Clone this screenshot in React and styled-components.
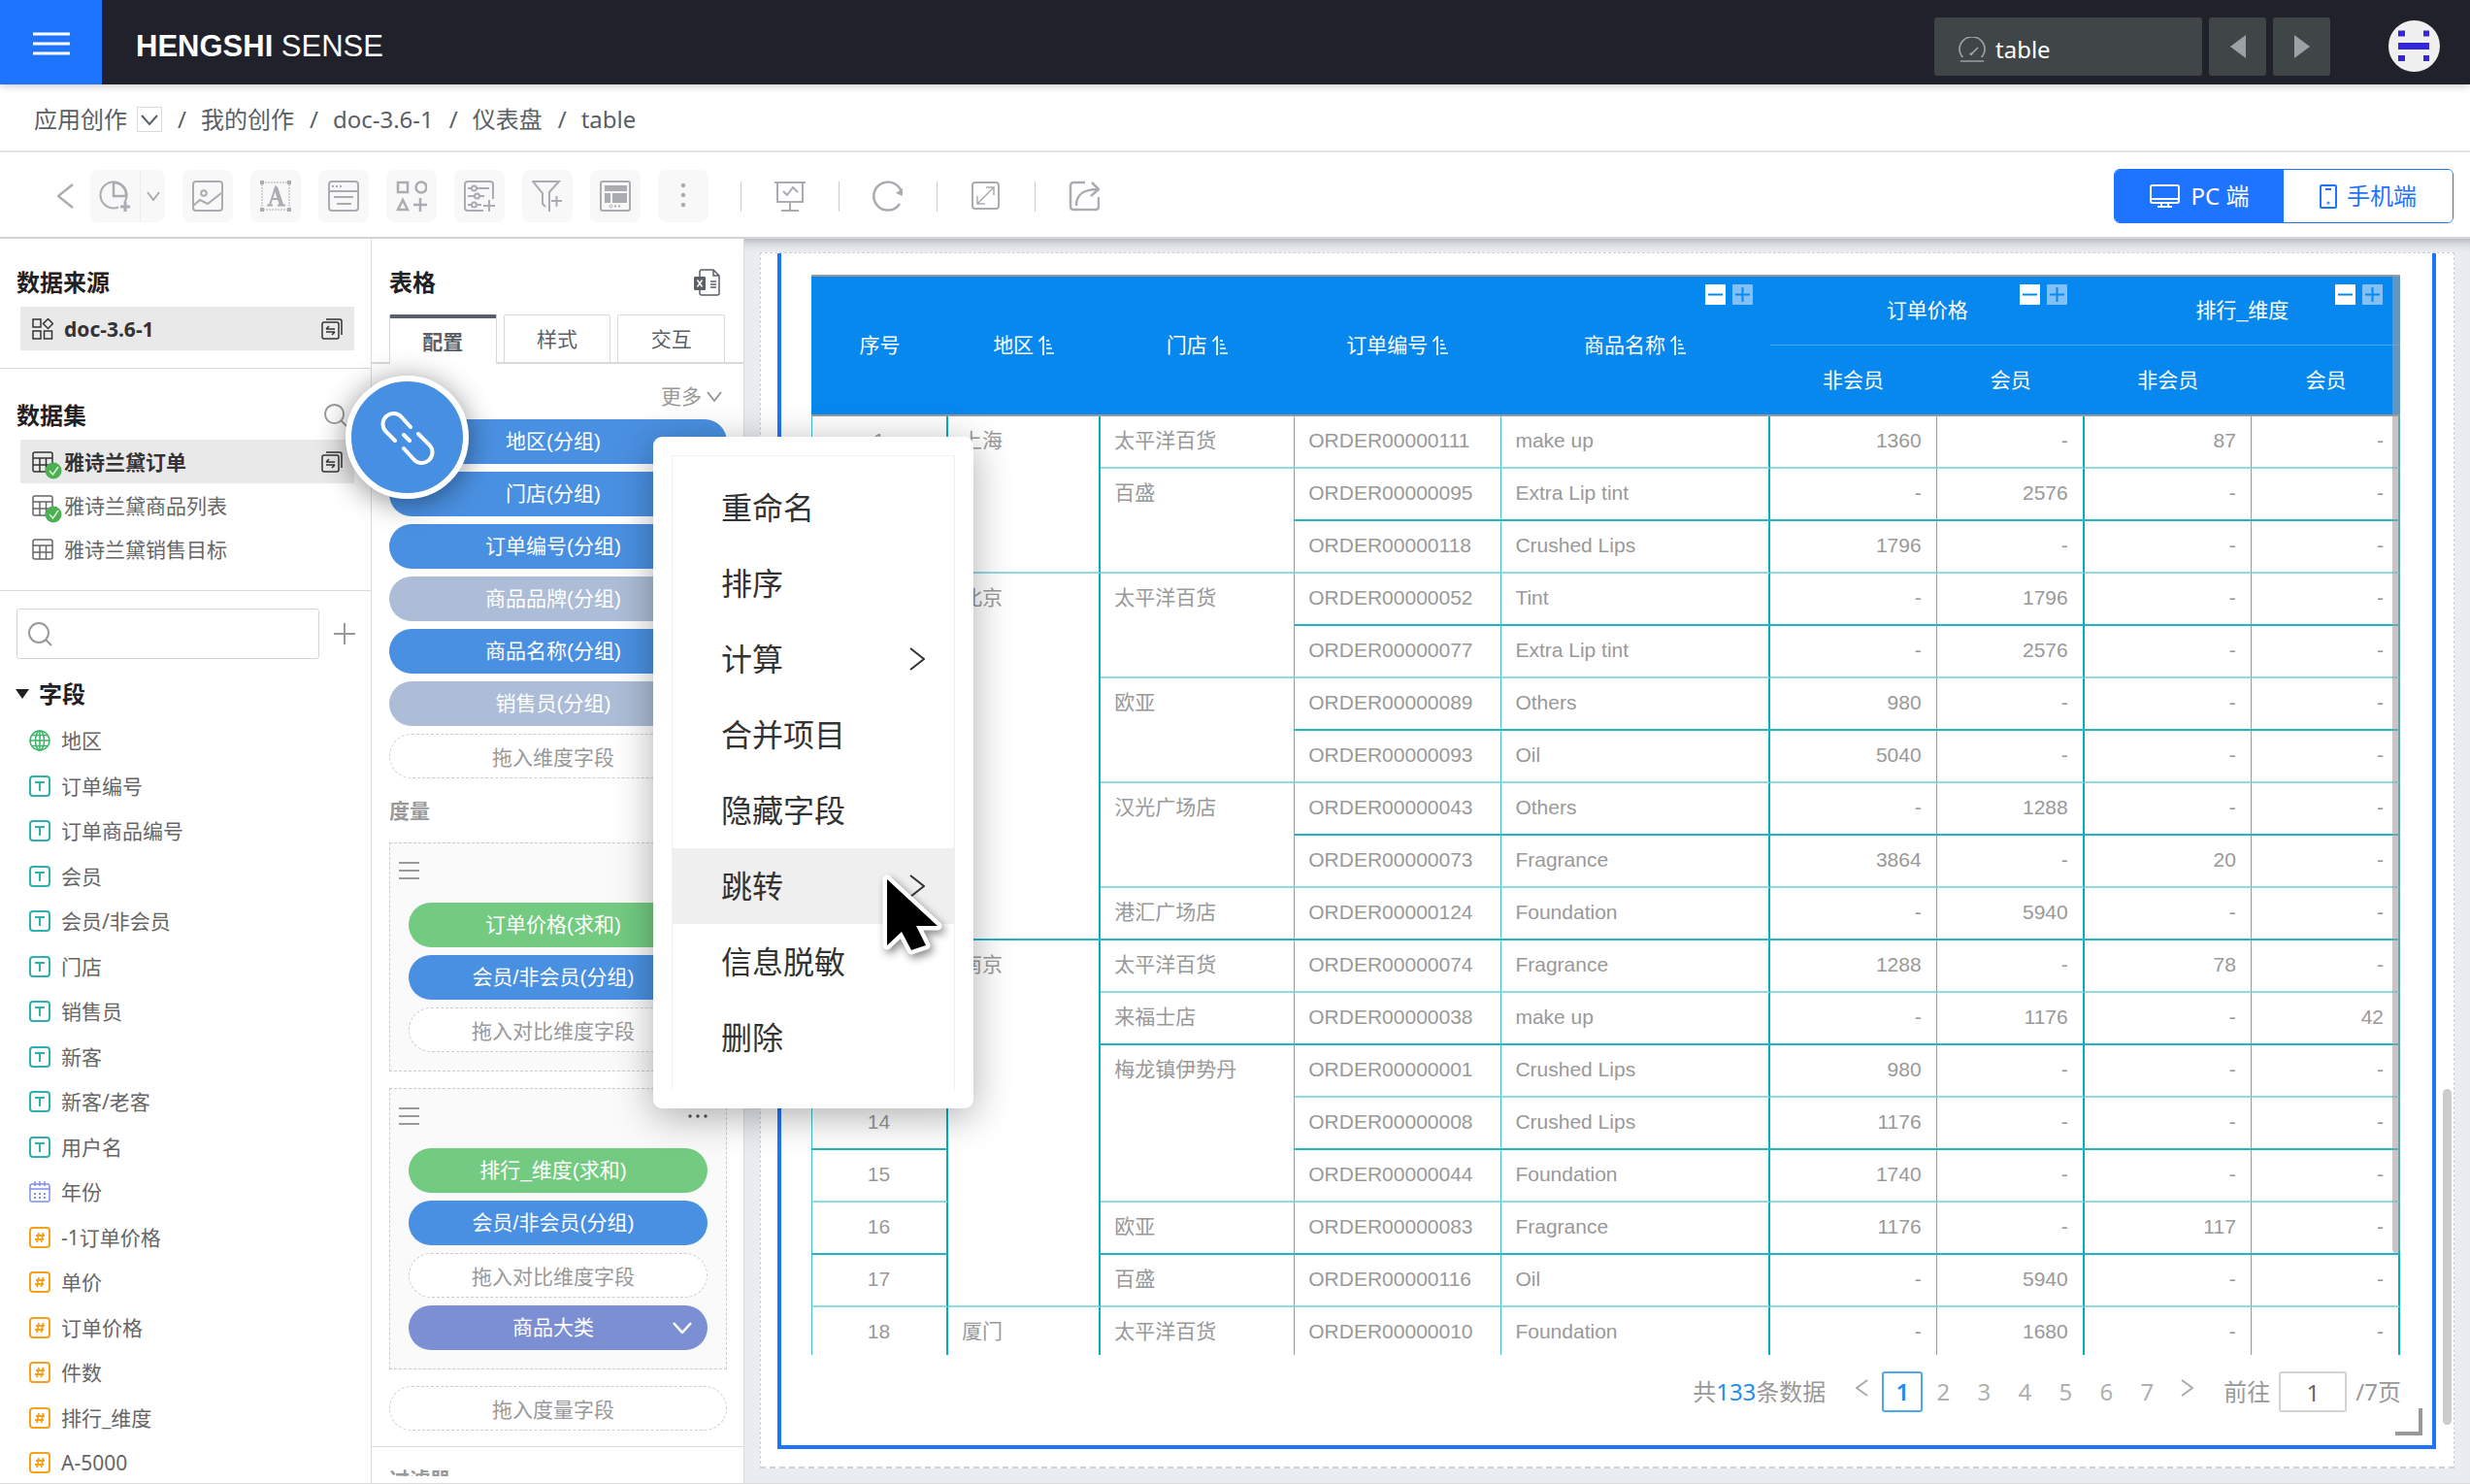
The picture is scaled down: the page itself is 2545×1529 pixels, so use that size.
import React from "react";
import styled, { createGlobalStyle, css } from "styled-components";

const ui = `"Noto Sans", "Noto Sans CJK SC", sans-serif`;
const grid = `"Liberation Sans", "Noto Sans CJK SC", sans-serif`;

const GlobalStyle = createGlobalStyle`
  *, *::before, *::after { box-sizing: border-box; }
  body { margin: 0; font-family: ${ui}; background: #fff; }
  button, input { font-family: inherit; margin: 0; }
  button { border: 0; padding: 0; background: none; cursor: pointer; color: inherit; }
  h1, h2, h3, p, ul, ol { margin: 0; padding: 0; }
  ul, ol { list-style: none; }
  a { color: inherit; text-decoration: none; }
  svg { display: block; flex: none; }
`;

const Page = styled.div`
  position: relative;
  display: flex;
  flex-direction: column;
  height: 100vh;
  overflow: hidden;
`;

/* ---------- top bar ---------- */
const TopBar = styled.header`
  position: relative;
  z-index: 3;
  display: flex;
  align-items: stretch;
  height: 87px;
  flex: none;
  background: #21212b;
  box-shadow: 0 2px 8px rgba(0, 0, 0, 0.2);
`;
const MenuButton = styled.button`
  display: flex;
  align-items: center;
  justify-content: center;
  width: 105px;
  padding-top: 3px;
  background: #1f74ff;
`;
const Brand = styled.h1`
  align-self: center;
  padding: 9px 0 0 35px;
  font: 400 31px/40px "Liberation Sans", sans-serif;
  color: #fff;
`;
const TopTools = styled.div`
  display: flex;
  align-items: center;
  gap: 7px;
  margin-left: auto;
  padding: 8px 31px 0 0;
`;
const TopButton = styled.button`
  display: flex;
  align-items: center;
  justify-content: ${(p) => (p.$wide ? "flex-start" : "center")};
  gap: 9px;
  width: ${(p) => (p.$wide ? 276 : 59)}px;
  height: 60px;
  padding: ${(p) => (p.$wide ? "6px 0 0 24px" : "0")};
  border-radius: 3px;
  background: #404548;
  color: #fff;
  font-size: 24px;
  line-height: 32px;
`;
const Avatar = styled.button`
  margin-left: 53px;
`;

/* ---------- breadcrumb ---------- */
const Crumbs = styled.nav`
  flex: none;
  height: 70px;
  padding: 0 35px;
  border-bottom: 2px solid #e3e3e3;
  color: #5a5f66;
  font-size: 24px;
  line-height: 32px;
  ol { display: flex; align-items: center; height: 100%; padding-top: 4px; }
  li { display: flex; align-items: center; gap: 10px; }
  li + li::before { content: "/"; margin: 0 5px 0 16px; }
`;
const CrumbToggle = styled.button`
  display: flex;
  align-items: center;
  justify-content: center;
  width: 26px;
  height: 26px;
  border: 1px solid #d9d9d9;
`;

/* ---------- toolbar ---------- */
const Toolbar = styled.div`
  flex: none;
  display: flex;
  align-items: center;
  height: 89px;
  padding: 3px 17px 0 59px;
  border-bottom: 2px solid #d4d4d4;
  background: #fff;
  color: #aaacb2;
`;
const ToolGroup = styled.div`
  display: flex;
  align-items: center;
  gap: 18px;
  margin-left: 17px;
`;
const Tool = styled.button`
  display: flex;
  align-items: center;
  justify-content: center;
  width: ${(p) => p.$width || 52}px;
  height: 54px;
  border-radius: ${(p) => p.$radius || "8px"};
  background: #f8f8f8;
  border-right: ${(p) => (p.$split ? "1px solid #eee" : "0")};
`;
const Split = styled.div`
  display: flex;
`;
const PlainTools = styled.div`
  display: flex;
  align-items: center;
  gap: 34px;
  margin-left: 33px;
`;
const Bar = styled.span`
  width: 1px;
  height: 31px;
  background: #ccc;
`;
const DeviceSwitch = styled.div`
  display: flex;
  width: 350px;
  height: 56px;
  margin-left: auto;
  border: 1px solid #1f74ff;
  border-radius: 6px;
  overflow: hidden;
`;
const Device = styled.button`
  flex: 1;
  display: flex;
  align-items: center;
  justify-content: center;
  gap: ${(p) => (p.$active ? 12 : 10)}px;
  background: ${(p) => (p.$active ? "#1f74ff" : "#fff")};
  color: ${(p) => (p.$active ? "#fff" : "#1f74ff")};
  font-size: 24px;
  line-height: 32px;
`;

/* ---------- work area ---------- */
const Work = styled.div`
  flex: 1;
  min-height: 0;
  display: flex;
  border-bottom: 1px solid #dcdcdc;
`;
const Panel = styled.aside`
  flex: none;
  display: flex;
  flex-direction: column;
  width: ${(p) => p.$width}px;
  min-height: 0;
  overflow: hidden;
  border-right: 1px solid #dcdcdc;
  background: #fff;
`;
const Section = styled.section`
  padding: ${(p) => p.$top}px 17px ${(p) => p.$bottom}px;
  border-bottom: 1px solid #d9d9d9;
`;
const TitleRow = styled.div`
  display: flex;
  align-items: center;
  justify-content: space-between;
  padding-right: 7px;
  button { color: #999; }
`;
const Title = styled.h2`
  color: #1f2125;
  font-size: 24px;
  line-height: 32px;
  font-weight: 700;
`;
const SetList = styled.ul`
  margin: 9px 0 0 4px;
`;
const SetItem = styled.li`
  display: flex;
  align-items: center;
  gap: 11px;
  height: 45px;
  padding: 0 12px;
  background: ${(p) => (p.$active ? "#e9e9e9" : "transparent")};
  color: ${(p) => (p.$active ? "#333" : "#666")};
  font-size: 21px;
  line-height: 32px;
  font-weight: ${(p) => (p.$active ? 700 : 400)};
  button { margin-left: auto; color: #333; }
`;
const SearchRow = styled.div`
  display: flex;
  align-items: center;
  gap: 15px;
  padding: 18px 16px 0 17px;
  color: #999;
`;
const SearchBox = styled.label`
  flex: 1;
  min-width: 0;
  display: flex;
  align-items: center;
  height: 52px;
  padding-left: 11px;
  border: 1px solid #d4d4d4;
  border-radius: 3px;
  input {
    flex: 1;
    min-width: 0;
    border: 0;
    outline: 0;
    background: none;
    font-size: 21px;
  }
`;
const FieldsTitle = styled.button`
  display: flex;
  align-items: center;
  gap: 10px;
  padding: 20px 16px 0;
`;
const FieldList = styled.ul`
  display: grid;
  grid-auto-rows: 46px 47px;
  margin-top: 9px;
`;
const Field = styled.li`
  display: flex;
  align-items: center;
  gap: 11px;
  padding-left: 30px;
  color: #666;
  font-size: 21px;
  line-height: 32px;
`;

/* ---------- config panel ---------- */
const ConfigHead = styled.div`
  display: flex;
  justify-content: space-between;
  align-items: center;
  padding: 29px 23px 0 18px;
`;
const Tabs = styled.div`
  display: flex;
  gap: 7px;
  flex: none;
  height: 51px;
  margin-top: 17px;
  padding: 0 19px 0 18px;
  box-shadow: inset 0 -2px 0 #d9d9d9;
`;
const Tab = styled.button`
  flex: 1;
  border: 1px solid #d9d9d9;
  border-top: ${(p) => (p.$active ? "4px solid #5a5f69" : "1px solid #d9d9d9")};
  border-bottom: ${(p) => (p.$active ? "0" : "2px solid #d9d9d9")};
  border-radius: 2px 2px 0 0;
  background: #fff;
  color: #5a5f69;
  font-size: 21px;
  line-height: 32px;
  font-weight: ${(p) => (p.$active ? 700 : 400)};
`;
const More = styled.button`
  display: flex;
  align-items: center;
  align-self: flex-end;
  gap: 5px;
  margin: 17px 22px 8px 0;
  color: #999;
  font-size: 21px;
  line-height: 32px;
`;
const Stack = styled.div`
  display: flex;
  flex-direction: column;
  gap: 8px;
  padding: ${(p) => p.$pad || "0"};
`;
const pillColors = { blue: "#4a90e2", muted: "#adbdd7", green: "#73cb81", purple: "#7c8fd2" };
const Pill = styled.button`
  position: relative;
  display: flex;
  align-items: center;
  justify-content: center;
  flex: none;
  width: 100%;
  height: 46px;
  padding-right: 10px;
  border-radius: 23px;
  background: ${(p) => pillColors[p.$tone]};
  color: #fff;
  font-family: ${grid};
  font-size: 21px;
  line-height: 32px;
  svg { position: absolute; right: 16px; }
`;
const Drop = styled.div`
  display: flex;
  align-items: center;
  justify-content: center;
  height: 46px;
  padding: 2px 10px 0 0;
  border: 1px dashed #ccc;
  border-radius: 23px;
  background: #fff;
  color: #999;
  font-size: 21px;
  line-height: 32px;
`;
const SubTitle = styled.h3`
  padding: 17px 18px 0;
  color: #999;
  font-size: 21px;
  line-height: 32px;
  font-weight: 700;
`;
const Measures = styled.div`
  display: flex;
  flex-direction: column;
  gap: 17px;
  padding: 17px 17px 16px 18px;
  border-bottom: 1px solid #d9d9d9;
`;
const Group = styled.div`
  padding: 0 19px 19px;
  border: 1px dashed #ccc;
  background: #fafafa;
`;
const GroupHead = styled.div`
  display: flex;
  align-items: center;
  justify-content: space-between;
  height: 61px;
  margin-left: -10px;
  padding-bottom: 6px;
  color: #999;
`;
const FilterPeek = styled.div`
  flex: none;
  height: 30px;
  overflow: hidden;
`;

/* ---------- canvas ---------- */
const Canvas = styled.main`
  flex: 1;
  min-width: 0;
  display: flex;
  padding: 14px 16px 15px;
  background: #ebecf2;
  box-shadow: inset 0 12px 12px -10px rgba(0, 0, 0, 0.3);
`;
const Sheet = styled.div`
  position: relative;
  flex: 1;
  min-width: 0;
  display: flex;
  padding: 0 18px 18px 17px;
  border: 1px dashed #d0d0d4;
  border-bottom-width: 2px;
  background: #fff;
`;
const Widget = styled.section`
  position: relative;
  flex: 1;
  min-width: 0;
  display: flex;
  flex-direction: column;
  padding: 22px 33px 34px 31px;
  border: solid #1f74ff;
  border-width: 0 4px 4px;
`;
const Scroll = styled.div`
  position: relative;
  flex: 1;
  min-height: 0;
  overflow: hidden;
`;
const Thumb = styled.div`
  position: absolute;
  right: ${(p) => p.$right}px;
  top: ${(p) => p.$top};
  bottom: ${(p) => p.$bottom}px;
  width: ${(p) => p.$width}px;
  border-radius: 5px;
  background: ${(p) => p.$color};
`;
const Table = styled.table`
  width: 100%;
  table-layout: fixed;
  border-collapse: separate;
  border-spacing: 0;
  font-family: ${grid};
  font-size: 21px;
  line-height: 30px;
  color: #999;
`;
const Th = styled.th`
  position: relative;
  height: 73px;
  padding: 0;
  background: #0788ef;
  color: #fff;
  font-weight: 400;
  border-top: ${(p) => (p.$sub ? "0" : "2px solid #999")};
  border-bottom: ${(p) => (p.$line ? "1px solid #4fa6ee" : "2px solid #999")};
`;
const ThText = styled.span`
  display: inline-flex;
  align-items: center;
  gap: 5px;
  padding-right: 2px;
`;
const Fold = styled.span`
  position: absolute;
  top: 8px;
  right: 18px;
  display: flex;
  gap: 7px;
`;
const FoldButton = styled.button`
  display: flex;
  align-items: center;
  justify-content: center;
  width: 21px;
  height: 21px;
  border-radius: 1px;
  background: ${(p) => (p.$dim ? "#83c0f5" : "#fff")};
  color: #0788ef;
`;
const Td = styled.td`
  height: 54px;
  padding: 0 15px 0 14px;
  vertical-align: top;
  line-height: 50px;
  text-align: ${(p) => p.$align || "left"};
  white-space: nowrap;
  border-bottom: 2px solid ${(p) => (p.$strong ? "#1fb5c6" : "#8fdbe3")};
  border-right: ${(p) => (p.$thick ? "2px solid #00b0c0" : "1px solid #3fc0cc")};
  ${(p) => p.$first && css`border-left: 1px solid #3fc0cc;`}
`;
const Pager = styled.nav`
  display: flex;
  align-items: center;
  justify-content: flex-end;
  height: 42px;
  margin: 17px -1px 0 0;
  color: #999;
  font-size: 24px;
  line-height: 32px;
  b { color: #1f8cf0; font-weight: 400; }
`;
const PageButton = styled.button`
  width: 42px;
  height: 42px;
  border: ${(p) => (p.$active ? "2px solid #4fa6f0" : "0")};
  border-radius: 3px;
  color: ${(p) => (p.$active ? "#1f8cf0" : "#b0b0b0")};
  font-size: 24px;
  line-height: 32px;
  font-weight: ${(p) => (p.$active ? 600 : 400)};
`;
const Arrow = styled.button`
  display: flex;
  padding: ${(p) => p.$pad};
  color: #aaa;
`;
const GoTo = styled.label`
  display: flex;
  align-items: center;
  gap: 9px;
  input {
    width: 70px;
    height: 42px;
    border: 2px solid #d4d4d4;
    border-radius: 3px;
    padding: 0;
    text-align: center;
    color: #666;
    font-size: 24px;
  }
`;
const Corner = styled.span`
  position: absolute;
  right: 10px;
  bottom: 10px;
  width: 28px;
  height: 28px;
  border: solid #999;
  border-width: 0 4px 4px 0;
`;

/* ---------- floating pieces ---------- */
const LinkBubble = styled.button`
  position: absolute;
  z-index: 5;
  left: 356px;
  top: 387px;
  display: flex;
  align-items: center;
  justify-content: center;
  width: 127px;
  height: 127px;
  border: 6px solid #fff;
  border-radius: 50%;
  background: #478fe3;
  box-shadow: 0 4px 30px rgba(0, 0, 0, 0.45);
`;
const Popup = styled.div`
  position: absolute;
  z-index: 6;
  left: 673px;
  top: 450px;
  width: 330px;
  padding: 19px;
  border-radius: 9px;
  background: #fff;
  box-shadow: 0 8px 40px rgba(0, 0, 0, 0.32);
`;
const MenuList = styled.ul`
  padding: 14px 0 15px;
  border: 1px solid #f0f0f0;
  border-bottom: 0;
`;
const MenuItem = styled.button`
  display: flex;
  align-items: center;
  justify-content: space-between;
  width: 100%;
  height: 78px;
  padding: 0 30px 0 50px;
  background: ${(p) => (p.$active ? "#efefef" : "#fff")};
  color: #333;
  font-size: 32px;
  line-height: 40px;
`;
const Cursor = styled.svg`
  position: absolute;
  z-index: 7;
  left: 905px;
  top: 897px;
  filter: drop-shadow(3px 4px 4px rgba(0, 0, 0, 0.45));
`;

/* ---------- icons ---------- */
const Svg = ({ w = 32, h = w, vb, sw = 2, children, ...rest }) => (
  <svg width={w} height={h} viewBox={vb || `0 0 ${w} ${h}`} fill="none" stroke="currentColor" strokeWidth={sw} aria-hidden="true" {...rest}>
    {children}
  </svg>
);
const Chevron = ({ dir, w, h, sw = 2, color }) => {
  const d = {
    down: `M1 1L${w / 2} ${h - 1}L${w - 1} 1`,
    right: `M1 1L${w - 1} ${h / 2}L1 ${h - 1}`,
    left: `M${w - 1} 1L1 ${h / 2}L${w - 1} ${h - 1}`,
  }[dir];
  return <Svg w={w} h={h} sw={sw} color={color}><path d={d} /></Svg>;
};
const Lines = ({ w, h, sw }) => (
  <Svg w={w} h={h} sw={sw}><path d={`M0 ${sw / 2}H${w}M0 ${h / 2}H${w}M0 ${h - sw / 2}H${w}`} /></Svg>
);
const Search = ({ w = 25 }) => (
  <Svg w={w} vb="0 0 25 25"><circle cx="11" cy="11" r="10" /><path d="M18 18l6 6" /></Svg>
);
const PieIcon = () => (
  <Svg w={34} h={34}>
    <circle cx="15" cy="16" r="13.500" />
    <path d="M15 3V17H28A13 13 0 0 0 15 3Z" fill="#f8f8f8" strokeWidth="2.500" />
    <path d="M20 23H34V34H20Z" fill="#f8f8f8" stroke="none" />
    <path d="M22 28H32M27 23V33" strokeWidth="3" />
  </Svg>
);
const ImageIcon = () => (
  <Svg><rect x="1" y="1" width="30" height="30" rx="3" /><circle cx="12" cy="13" r="2.800" /><path d="M1 26l7-6 8 4L30 13" /></Svg>
);
const TextIcon = () => (
  <Svg sw={1}>
    <rect x="2" y="2" width="28" height="28" strokeDasharray="2 1" />
    <path d="M0 0h4v4H0zM28 0h4v4h-4zM0 28h4v4H0zM28 28h4v4h-4z" fill="currentColor" stroke="none" />
    <path d="M10 25l6-18 6.500 18M12 19h8" strokeWidth="2" /><path d="M16 7l6 18" strokeWidth="4" /><path d="M7 25.500h6M18 25.500h8" strokeWidth="2" />
  </Svg>
);
const WindowIcon = () => (
  <Svg><rect x="1" y="1" width="30" height="30" rx="3" /><path d="M1 11H31M6 17H26M9 24H24" /><path d="M4 6H14" strokeDasharray="2 2" /></Svg>
);
const ShapesIcon = () => (
  <Svg sw={2.5}><rect x="2" y="2" width="10" height="10" /><circle cx="26" cy="7" r="5.500" /><path d="M7 20l5 10H2zM25 18V32M18 25H32" /></Svg>
);
const SlidersIcon = () => (
  <Svg>
    <path d="M30 19V4a3 3 0 0 0-3-3H4a3 3 0 0 0-3 3v24a3 3 0 0 0 3 3H20M20 26H32M26 20V32" />
    <path d="M4 8h4M13 8H26M4 16h7M16 16h5M4 25h4M13 25h5" />
    <circle cx="10.500" cy="8" r="2.500" /><circle cx="13.500" cy="16" r="2.500" /><circle cx="10.500" cy="25" r="2.500" />
  </Svg>
);
const FunnelIcon = () => (
  <Svg><path d="M14 27l-3-3V13L1 1H28L18 12V32M20 21H31M25.500 16V27" /></Svg>
);
const BoardIcon = () => (
  <Svg>
    <rect x="1" y="1" width="30" height="30" rx="2" />
    <path d="M5 5H28V11H5zM5 13H11V23H5zM13 13H28V23H13z" fill="currentColor" stroke="none" />
    <circle cx="11.500" cy="26.500" r="1.500" strokeWidth="1" /><path d="M15 26.500h2M19 26.500h2" />
  </Svg>
);
const DotsV = () => (
  <Svg w={6} h={32} fill="currentColor" stroke="none"><circle cx="3" cy="5" r="2.200" /><circle cx="3" cy="15" r="2.200" /><circle cx="3" cy="25" r="2.200" /></Svg>
);
const DotsH = () => (
  <Svg w={20} h={6} fill="#555" stroke="none"><circle cx="2" cy="3" r="1.700" /><circle cx="10" cy="3" r="1.700" /><circle cx="18" cy="3" r="1.700" /></Svg>
);
const PresentIcon = () => (
  <Svg><path d="M0 2H32M3 2V22H29V2M16 22V31M7 31H25M9 11l4 4 6-8 5 5" /></Svg>
);
const ReloadIcon = () => (
  <Svg sw={2.5}><path d="M28 24A14.500 14.500 0 1 1 30 13" /><path d="M31 16l-7-3 7-5z" fill="currentColor" stroke="none" /></Svg>
);
const ExpandIcon = () => (
  <Svg><rect x="2" y="2" width="27" height="27" rx="3" /><path d="M7 24L24 7M16 7h8v8M15 24H7v-8" strokeWidth="1.500" /></Svg>
);
const ShareIcon = () => (
  <Svg sw={2.5}><path d="M17 2H5a3 3 0 0 0-3 3V27a3 3 0 0 0 3 3H28a3 3 0 0 0 3-3V17" /><path d="M8 26C8 15 14 9 31 9M24 2l7 7-8 7" /></Svg>
);
const CopyIcon = () => (
  <Svg w={22} sw={1.5}>
    <rect x="1" y="4" width="17" height="17" rx="2" /><path d="M5 1H19a2 2 0 0 1 2 2V17M5 11h9M5 11l3-3M14 14H5M14 14l-3 3" />
  </Svg>
);
const AppsIcon = () => (
  <Svg w={22} sw={1.5}><rect x="1" y="1" width="8" height="8" /><rect x="1" y="13" width="8" height="8" /><rect x="12.500" y="13" width="8" height="8" /><path d="M16.500 0.500l5 5-5 5-5-5z" /></Svg>
);
const TableIcon = ({ ok }) => (
  <Svg w={22} sw={1.5} overflow="visible">
    <rect x="1" y="1" width="20" height="20" rx="2" /><path d="M1 7H21M1 14H21M8 7V21M14.500 7V21" />
    {ok && <><circle cx="22" cy="20" r="8.500" fill="#4caf50" stroke="none" /><path d="M18 20l3.500 4L27 16" stroke="#d9f2da" /></>}
  </Svg>
);
const fieldColors = { geo: "#3db36b", text: "#2cb1ae", date: "#7d8ff0", num: "#f7a01b" };
const FieldIcon = ({ kind }) => (
  <Svg w={22} sw={1.5} color={fieldColors[kind]}>
    {kind === "geo" && <><circle cx="11" cy="11" r="10" /><ellipse cx="11" cy="11" rx="4.500" ry="10" /><path d="M11 1V21M1 11H21M3 5.500H19M3 16.500H19" /></>}
    {kind === "text" && <><rect x="1" y="1" width="20" height="20" rx="3" strokeWidth="2" /><path d="M6 7H16M11 7V16" strokeWidth="2" /></>}
    {kind === "date" && <><rect x="1" y="3" width="20" height="18" rx="2" /><path d="M1 8H21M6 0V5M11 0V5M16 0V5" /><path d="M5 13H17M5 17H17" strokeWidth="2" strokeDasharray="2 3" /></>}
    {kind === "num" && <><rect x="1" y="1" width="20" height="20" rx="3" strokeWidth="2" /><path d="M10 6L8 16M14.500 6l-2 10M7 9h9M6 13h9" strokeWidth="1.800" /></>}
  </Svg>
);
const ExcelIcon = () => (
  <Svg w={28} sw={1.5} color="#5a5f69">
    <path d="M6 8V3a2 2 0 0 1 2-2H20l6 6V25a2 2 0 0 1-2 2H8a2 2 0 0 1-2-2V22M20 1V7H26M17 13H23M17 16H23M17 19H23" />
    <rect x="0" y="8" width="12" height="14" rx="1" fill="currentColor" stroke="none" /><path d="M3.500 11.500l5 7M8.500 11.500l-5 7" stroke="#fff" />
  </Svg>
);
const SortIcon = () => (
  <Svg w={16} h={20} sw={1.7}><path d="M5 20V1L0.500 6M8 5h3M8 9h4.500M8 13h6M8 18h8" /></Svg>
);
const GaugeIcon = () => (
  <Svg w={30} h={26} color="#9da0a3" sw={1.7}><path d="M5.500 21A13 12.500 0 1 1 24.500 21M3 25H27M14 18L21 11" /><circle cx="14" cy="17.500" r="1.500" fill="currentColor" stroke="none" /></Svg>
);
const ScreenIcon = () => (
  <Svg w={31} h={24}><rect x="1" y="1" width="29" height="18" rx="2" /><path d="M1 15H30M12 19V23M19 19V23M8 23H23" /></Svg>
);
const PhoneIcon = () => (
  <Svg w={18} h={25}><rect x="1" y="1" width="16" height="23" rx="1" /><path d="M6 5H12" /><circle cx="9" cy="19" r="0.500" /></Svg>
);
const Identicon = () => (
  <svg width="53" height="53" viewBox="0 0 53 53" aria-hidden="true">
    <circle cx="26.500" cy="26.500" r="26.500" fill="#f0f0f0" />
    <path d="M10 10.500h7v6h-7zM36 10.500h6v6h-6zM10 23h32v7H10zM10 36h7v6h-7zM36 36h6v6h-6z" fill="#3427d9" />
  </svg>
);
const ChainIcon = () => (
  <Svg w={56} h={56} sw={4} color="#fff" strokeLinecap="round">
    <path d="M31 17L22 7A11 11 0 0 0 5 21L15 31M24 39L34 50A11 11 0 0 0 51 36L39 24M24 25L30 31" />
  </Svg>
);

/* ---------- data ---------- */
const fields = [
  ["geo", "地区"], ["text", "订单编号"], ["text", "订单商品编号"], ["text", "会员"], ["text", "会员/非会员"],
  ["text", "门店"], ["text", "销售员"], ["text", "新客"], ["text", "新客/老客"], ["text", "用户名"], ["date", "年份"],
  ["num", "-1订单价格"], ["num", "单价"], ["num", "订单价格"], ["num", "件数"], ["num", "排行_维度"], ["num", "A-5000"],
];
const dims = [
  ["blue", "地区(分组)"], ["blue", "门店(分组)"], ["blue", "订单编号(分组)"],
  ["muted", "商品品牌(分组)"], ["blue", "商品名称(分组)"], ["muted", "销售员(分组)"],
];
// [region, region span], [store, store span], order, product, four measures
const rows = [
  [["上海", 3], ["太平洋百货", 1], "111", "make up", "1360", "-", "87", "-"],
  [null, ["百盛", 2], "095", "Extra Lip tint", "-", "2576", "-", "-"],
  [null, null, "118", "Crushed Lips", "1796", "-", "-", "-"],
  [["北京", 7], ["太平洋百货", 2], "052", "Tint", "-", "1796", "-", "-"],
  [null, null, "077", "Extra Lip tint", "-", "2576", "-", "-"],
  [null, ["欧亚", 2], "089", "Others", "980", "-", "-", "-"],
  [null, null, "093", "Oil", "5040", "-", "-", "-"],
  [null, ["汉光广场店", 2], "043", "Others", "-", "1288", "-", "-"],
  [null, null, "073", "Fragrance", "3864", "-", "20", "-"],
  [null, ["港汇广场店", 1], "124", "Foundation", "-", "5940", "-", "-"],
  [["南京", 7], ["太平洋百货", 1], "074", "Fragrance", "1288", "-", "78", "-"],
  [null, ["来福士店", 1], "038", "make up", "-", "1176", "-", "42"],
  [null, ["梅龙镇伊势丹", 3], "001", "Crushed Lips", "980", "-", "-", "-"],
  [null, null, "008", "Crushed Lips", "1176", "-", "-", "-"],
  [null, null, "044", "Foundation", "1740", "-", "-", "-"],
  [null, ["欧亚", 1], "083", "Fragrance", "1176", "-", "117", "-"],
  [null, ["百盛", 1], "116", "Oil", "-", "5940", "-", "-"],
  [["厦门", 1], ["太平洋百货", 1], "010", "Foundation", "-", "1680", "-", "-"],
];
const colWidths = [141, 157, 200, 213, 276, 172, 152, 172, 153];
const menu = [
  ["重命名"], ["排序"], ["计算", true], ["合并项目"], ["隐藏字段"], ["跳转", true], ["信息脱敏"], ["删除"],
];

const FoldControls = () => (
  <Fold>
    <FoldButton aria-label="收起"><Svg w={15}><path d="M0 7.500H15" /></Svg></FoldButton>
    <FoldButton $dim aria-label="展开"><Svg w={15}><path d="M0 7.500H15M7.500 0V15" /></Svg></FoldButton>
  </Fold>
);

function DataTable() {
  const strong = (last) => last % 2 === 0;
  return (
    <Table>
      <colgroup>{colWidths.map((w, i) => <col key={i} style={{ width: w }} />)}</colgroup>
      <thead>
        <tr>
          <Th rowSpan={2}>序号</Th>
          {["地区", "门店", "订单编号", "商品名称"].map((t) => (
            <Th key={t} rowSpan={2}><ThText>{t}<SortIcon /></ThText>{t === "商品名称" && <FoldControls />}</Th>
          ))}
          <Th colSpan={2} $line>订单价格<FoldControls /></Th>
          <Th colSpan={2} $line>排行_维度<FoldControls /></Th>
        </tr>
        <tr>
          <Th $sub>非会员</Th><Th $sub>会员</Th><Th $sub>非会员</Th><Th $sub>会员</Th>
        </tr>
      </thead>
      <tbody>
        {rows.map(([region, store, order, product, ...nums], i) => (
          <tr key={order}>
            <Td $align="center" $first $thick $strong={strong(i + 1)}>{i + 1}</Td>
            {region && <Td rowSpan={region[1]} $thick $strong={strong(i + region[1])}>{region[0]}</Td>}
            {store && <Td rowSpan={store[1]} $strong={strong(i + store[1])}>{store[0]}</Td>}
            <Td $strong={strong(i + 1)}>ORDER00000{order}</Td>
            <Td $thick $strong={strong(i + 1)}>{product}</Td>
            {nums.map((n, k) => (
              <Td key={k} $align="right" $thick={k % 2 === 1} $strong={strong(i + 1)}>{n}</Td>
            ))}
          </tr>
        ))}
      </tbody>
    </Table>
  );
}

export default function App() {
  return (
    <Page>
      <GlobalStyle />
      <TopBar>
        <MenuButton aria-label="菜单"><Svg w={38} h={24} sw={3} color="#fff"><path d="M0 2H38M0 12H38M0 22H38" /></Svg></MenuButton>
        <Brand><strong>HENGSHI</strong> SENSE</Brand>
        <TopTools>
          <TopButton $wide><GaugeIcon />table</TopButton>
          <TopButton aria-label="上一个"><Svg w={16} h={24} fill="#9da0a6" stroke="none"><path d="M0 12L16 0V24z" /></Svg></TopButton>
          <TopButton aria-label="下一个"><Svg w={16} h={24} fill="#9da0a6" stroke="none"><path d="M16 12L0 0V24z" /></Svg></TopButton>
          <Avatar aria-label="用户"><Identicon /></Avatar>
        </TopTools>
      </TopBar>

      <Crumbs aria-label="路径">
        <ol>
          <li><a href="#create">应用创作</a><CrumbToggle aria-label="切换"><Chevron dir="down" w={18} h={11} /></CrumbToggle></li>
          <li><a href="#mine">我的创作</a></li>
          <li><a href="#doc">doc-3.6-1</a></li>
          <li><a href="#board">仪表盘</a></li>
          <li>table</li>
        </ol>
      </Crumbs>

      <Toolbar>
        <button aria-label="返回"><Chevron dir="left" w={17} h={26} sw={2.5} /></button>
        <ToolGroup>
          <Split>
            <Tool $radius="8px 0 0 8px" $split aria-label="添加图表"><PieIcon /></Tool>
            <Tool $width={25} $radius="0 8px 8px 0" aria-label="更多图表"><Chevron dir="down" w={14} h={10} /></Tool>
          </Split>
          <Tool aria-label="图片"><ImageIcon /></Tool>
          <Tool aria-label="文本"><TextIcon /></Tool>
          <Tool aria-label="网页"><WindowIcon /></Tool>
          <Tool aria-label="素材"><ShapesIcon /></Tool>
          <Tool aria-label="参数"><SlidersIcon /></Tool>
          <Tool aria-label="过滤器"><FunnelIcon /></Tool>
          <Tool aria-label="布局"><BoardIcon /></Tool>
          <Tool aria-label="更多"><DotsV /></Tool>
        </ToolGroup>
        <PlainTools>
          <Bar />
          <button aria-label="演示"><PresentIcon /></button>
          <Bar />
          <button aria-label="刷新"><ReloadIcon /></button>
          <Bar />
          <button aria-label="全屏"><ExpandIcon /></button>
          <Bar />
          <button aria-label="分享"><ShareIcon /></button>
        </PlainTools>
        <DeviceSwitch>
          <Device $active><ScreenIcon />PC 端</Device>
          <Device><PhoneIcon />手机端</Device>
        </DeviceSwitch>
      </Toolbar>

      <Work>
        <Panel $width={383}>
          <Section $top={29} $bottom={18}>
            <Title>数据来源</Title>
            <SetList>
              <SetItem $active><AppsIcon />doc-3.6-1<button aria-label="替换"><CopyIcon /></button></SetItem>
            </SetList>
          </Section>
          <Section $top={32} $bottom={20}>
            <TitleRow>
              <Title>数据集</Title>
              <button aria-label="搜索数据集"><Search w={24} /></button>
            </TitleRow>
            <SetList>
              <SetItem $active><TableIcon ok />雅诗兰黛订单<button aria-label="替换"><CopyIcon /></button></SetItem>
              <SetItem><TableIcon ok />雅诗兰黛商品列表</SetItem>
              <SetItem><TableIcon />雅诗兰黛销售目标</SetItem>
            </SetList>
          </Section>
          <SearchRow>
            <SearchBox><Search /><input type="text" aria-label="搜索字段" /></SearchBox>
            <button aria-label="新建字段"><Svg w={22}><path d="M0 11H22M11 0V22" /></Svg></button>
          </SearchRow>
          <FieldsTitle>
            <Svg w={14} h={10} fill="#1f2125" stroke="none"><path d="M0 0H14L7 10z" /></Svg>
            <Title>字段</Title>
          </FieldsTitle>
          <FieldList>
            {fields.map(([kind, name]) => <Field key={name}><FieldIcon kind={kind} />{name}</Field>)}
          </FieldList>
        </Panel>

        <Panel $width={384}>
          <ConfigHead><Title>表格</Title><button aria-label="导出"><ExcelIcon /></button></ConfigHead>
          <Tabs>
            <Tab $active>配置</Tab><Tab>样式</Tab><Tab>交互</Tab>
          </Tabs>
          <More>更多<Chevron dir="down" w={16} h={11} /></More>
          <Stack $pad="0 17px 0 18px">
            {dims.map(([tone, name]) => <Pill key={name} $tone={tone}>{name}</Pill>)}
            <Drop>拖入维度字段</Drop>
          </Stack>
          <SubTitle>度量</SubTitle>
          <Measures>
            <Group>
              <GroupHead><Lines w={21} h={18} sw={2} /></GroupHead>
              <Stack>
                <Pill $tone="green">订单价格(求和)</Pill>
                <Pill $tone="blue">会员/非会员(分组)</Pill>
                <Drop>拖入对比维度字段</Drop>
              </Stack>
            </Group>
            <Group>
              <GroupHead><Lines w={21} h={18} sw={2} /><button aria-label="更多操作"><DotsH /></button></GroupHead>
              <Stack>
                <Pill $tone="green">排行_维度(求和)</Pill>
                <Pill $tone="blue">会员/非会员(分组)</Pill>
                <Drop>拖入对比维度字段</Drop>
                <Pill $tone="purple">商品大类<Chevron dir="down" w={20} h={12} sw={2.5} /></Pill>
              </Stack>
            </Group>
            <Drop>拖入度量字段</Drop>
          </Measures>
          <FilterPeek><SubTitle>过滤器</SubTitle></FilterPeek>
        </Panel>

        <Canvas>
          <Sheet>
            <Widget>
              <Scroll>
                <DataTable />
                <Thumb $right={0} $top="0" $bottom={105} $width={8} $color="rgba(160, 160, 160, 0.6)" />
              </Scroll>
              <Pager aria-label="分页">
                <p>共<b>133</b>条数据</p>
                <Arrow $pad="0 14px 8px 31px" aria-label="上一页"><Chevron dir="left" w={13} h={18} /></Arrow>
                {[1, 2, 3, 4, 5, 6, 7].map((n) => <PageButton key={n} $active={n === 1}>{n}</PageButton>)}
                <Arrow $pad="0 31px 8px 14px" aria-label="下一页"><Chevron dir="right" w={13} h={18} /></Arrow>
                <GoTo>前往<input type="text" defaultValue="1" />/7页</GoTo>
              </Pager>
              <Corner />
            </Widget>
            <Thumb $right={2} $top="861px" $bottom={43} $width={9} $color="#ccc" />
          </Sheet>
        </Canvas>
      </Work>

      <LinkBubble aria-label="关联"><ChainIcon /></LinkBubble>
      <Popup>
        <MenuList>
          {menu.map(([name, sub]) => (
            <li key={name}>
              <MenuItem $active={name === "跳转"}>{name}{sub && <Chevron dir="right" w={16} h={24} />}</MenuItem>
            </li>
          ))}
        </MenuList>
      </Popup>
      <Cursor width="70" height="96" viewBox="0 0 70 96" aria-hidden="true">
        <path d="M9 9V77L24 63L34 82L49 77L39 57H61Z" fill="#000" stroke="#fff" strokeWidth="9" strokeLinejoin="round" paintOrder="stroke" />
      </Cursor>
    </Page>
  );
}
